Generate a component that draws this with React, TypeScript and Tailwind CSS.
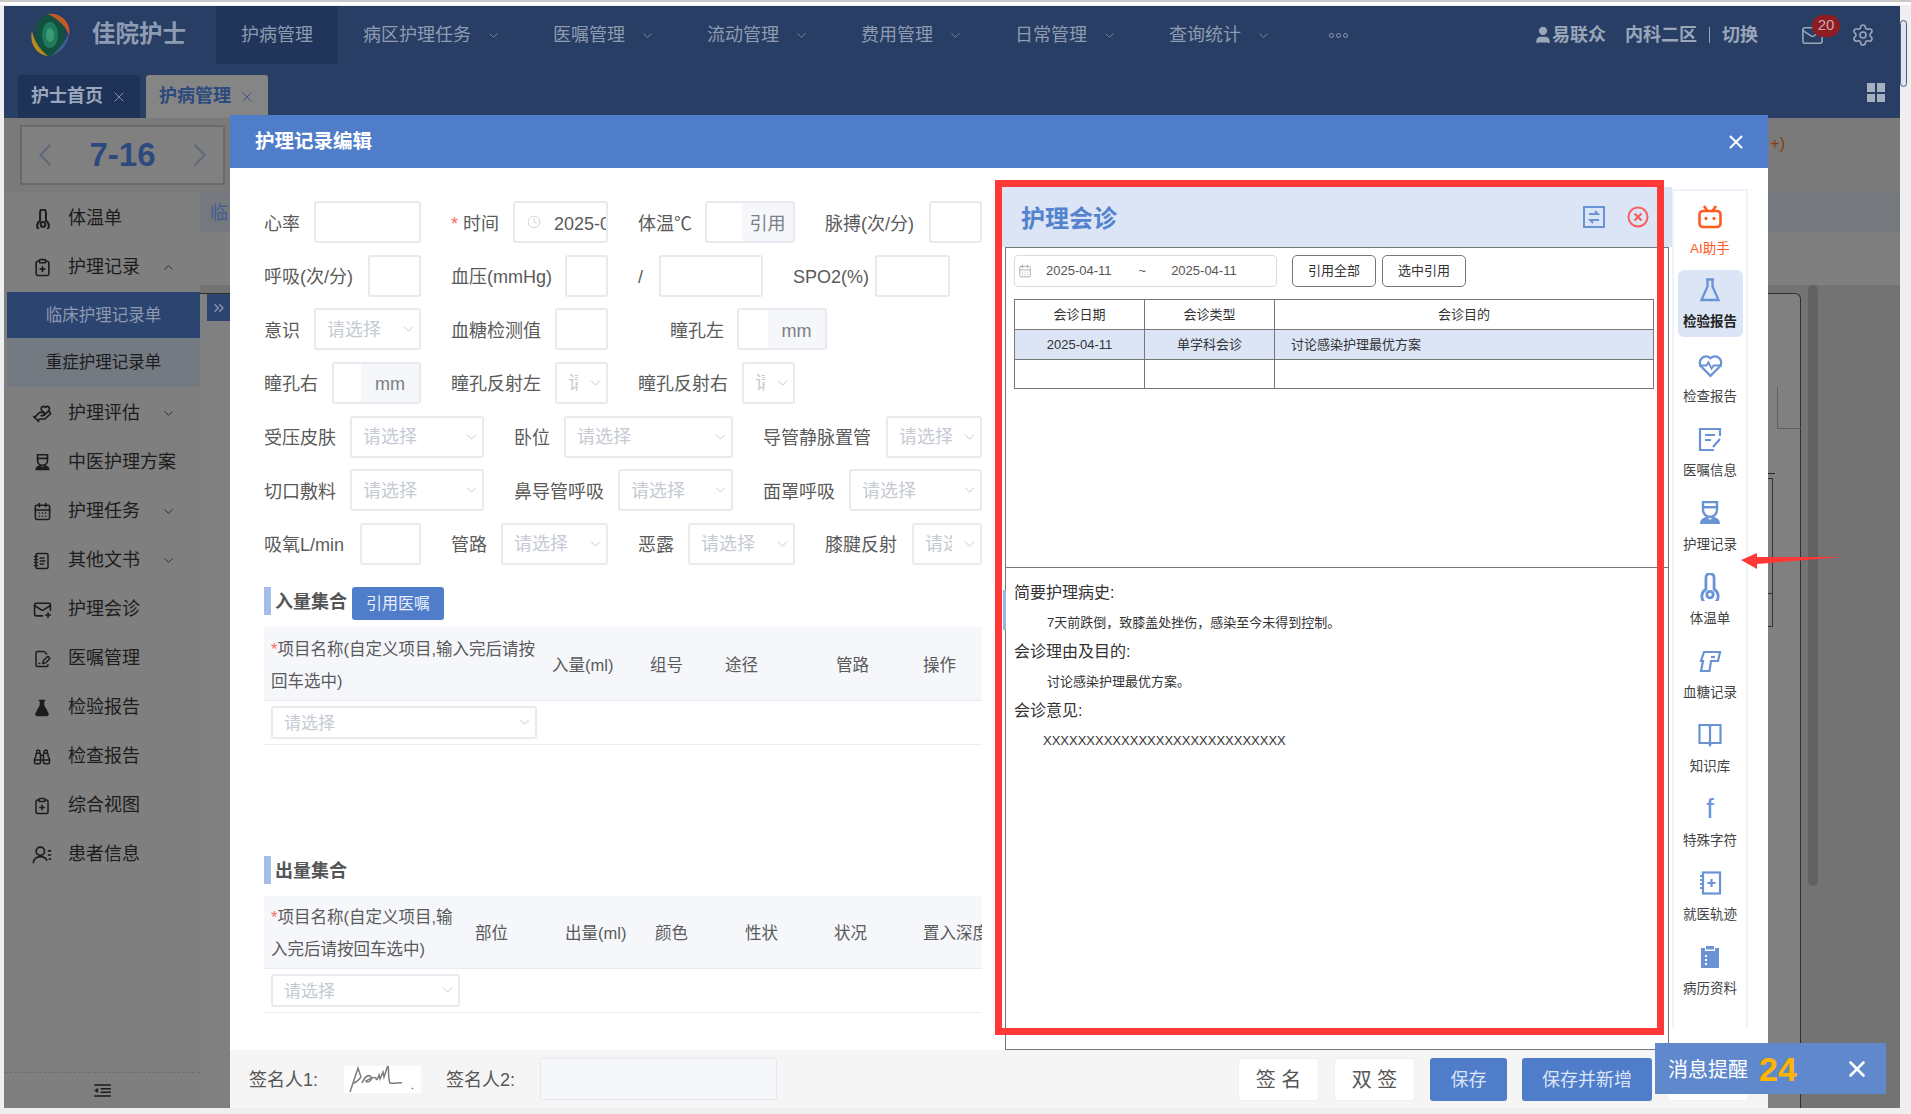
import React from 'react';
import {
  ChevronDown, ChevronUp, ChevronLeft, ChevronRight, X, ClipboardPlus, HandHeart, CalendarDays,
  NotebookText, MailPlus, FilePenLine, FlaskConical, Binoculars, Clock, Mail, Settings, User, ChevronsRight
} from 'lucide-react';

const navItems = ['病区护理任务', '医嘱管理', '流动管理', '费用管理', '日常管理', '查询统计'];

const NurseIcon: React.FC<{ className?: string }> = ({ className }) => (
  <svg viewBox="0 0 24 24" className={className} fill="currentColor">
    <path d="M5 1h14v8a7 7 0 0 1-14 0z" fill="none" stroke="currentColor" strokeWidth="2.4" />
    <rect x="5" y="5" width="14" height="2.4" />
    <path d="M2 23c0-5 4-7 7-7l3 3 3-3c3 0 7 2 7 7z" />
  </svg>
);

const ThermoIcon: React.FC<{ className?: string }> = ({ className }) => (
  <svg viewBox="0 0 24 24" className={className} fill="none" stroke="currentColor" strokeWidth="2.4">
    <path d="M8.5 14V4a3.500 3.500 0 0 1 7 0v10a7 7 0 1 1-7 0z" />
    <circle cx="12" cy="18.500" r="2.800" />
  </svg>
);

const PatientIcon = () => (
  <svg viewBox="0 0 24 24" className="w-[20px] h-[20px]" fill="none" stroke="currentColor" strokeWidth="2">
    <circle cx="10" cy="7.500" r="5" />
    <path d="M1.500 22c0-5 4-8 8.500-8s7 2 8 5M19 7h4M19 12h4M20 17h3" />
  </svg>
);

const sideItems: { label: string; icon: React.ReactNode; arrow?: boolean }[] = [
  { label: '护理评估', icon: <HandHeart size={20} />, arrow: true },
  { label: '中医护理方案', icon: <NurseIcon className="w-[17px] h-[17px]" /> },
  { label: '护理任务', icon: <CalendarDays size={19} />, arrow: true },
  { label: '其他文书', icon: <NotebookText size={18} />, arrow: true },
  { label: '护理会诊', icon: <MailPlus size={19} /> },
  { label: '医嘱管理', icon: <FilePenLine size={18} /> },
  { label: '检验报告', icon: <FlaskConical size={18} fill="currentColor" /> },
  { label: '检查报告', icon: <Binoculars size={18} /> },
  { label: '综合视图', icon: <ClipboardPlus size={18} /> },
  { label: '患者信息', icon: <PatientIcon /> },
];

const railIcons: { label: string; icon: React.ReactNode }[] = [
  {
    label: '检查报告',
    icon: (
      <svg viewBox="0 0 24 24" className="w-[25px] h-[25px]" fill="none" stroke="currentColor" strokeWidth="2.2">
        <path d="M12 22 3.500 13.500a6 6 0 0 1 0-8.500 6 6 0 0 1 8.500 0 6 6 0 0 1 8.500 0 6 6 0 0 1 0 8.500z" />
        <path d="M1 12h7l2-3 3 6 2-3h8" strokeWidth="1.800" />
      </svg>
    ),
  },
  {
    label: '医嘱信息',
    icon: (
      <svg viewBox="0 0 24 24" className="w-[24px] h-[24px]" fill="none" stroke="currentColor" strokeWidth="2.2">
        <path d="M22 9V2H2v21h14" />
        <path d="M7 8h10M7 13h6M15 20l7-8" />
      </svg>
    ),
  },
  { label: '护理记录', icon: <NurseIcon className="w-[24px] h-[24px]" /> },
  { label: '体温单', icon: <ThermoIcon className="w-[28px] h-[28px]" /> },
  {
    label: '血糖记录',
    icon: (
      <svg viewBox="0 0 24 24" className="w-[24px] h-[24px]" fill="none" stroke="currentColor" strokeWidth="2.2">
        <path d="M6 3h16l-2 9h-7l-1.500 10H3l2-10H3z" />
        <path d="M13 8h4" />
      </svg>
    ),
  },
  {
    label: '知识库',
    icon: (
      <svg viewBox="0 0 24 24" className="w-[24px] h-[24px]" fill="none" stroke="currentColor" strokeWidth="2.2">
        <path d="M1.500 2h9.500l1 1.500L13 2h9.500v18H13l-1 2-1-2H1.500z" />
        <path d="M12 3v17" />
      </svg>
    ),
  },
  { label: '特殊字符', icon: <span className="block h-[24px] leading-[24px] text-[27px]">f</span> },
  {
    label: '就医轨迹',
    icon: (
      <svg viewBox="0 0 24 24" className="w-[24px] h-[24px]" fill="none" stroke="currentColor" strokeWidth="2.2">
        <rect x="5" y="1.500" width="17" height="21" />
        <path d="M13.500 8v8M9.500 12h8M2 5h4M2 9h4M2 13h4M2 17h4" />
      </svg>
    ),
  },
  {
    label: '病历资料',
    icon: (
      <svg viewBox="0 0 24 24" className="w-[24px] h-[24px]" fill="currentColor">
        <path d="M3 3h4v3h10V3h4v20H3z" />
        <rect x="8" y="1" width="8" height="3.500" />
        <path d="M7 10h2v2H7zM7 14h2v2H7zM7 18h2v2H7z" fill="#fff" />
      </svg>
    ),
  },
];

const Field: React.FC<{ label: React.ReactNode; className: string; children: React.ReactNode }> = ({ label, className, children }) => (
  <div className={`flex items-center justify-between shrink-0 h-[42px] ${className}`}>
    <span className="whitespace-nowrap pt-[4px]">{label}</span>
    {children}
  </div>
);

const Box: React.FC<{ className: string; children?: React.ReactNode }> = ({ className, children }) => (
  <div className={`h-[42px] shrink-0 border-2 border-[#e8eaf0] rounded-[3px] flex items-center overflow-hidden bg-white ${className}`}>{children}</div>
);

const Select: React.FC<{ className: string; small?: boolean }> = ({ className, small }) => (
  <div className={`relative shrink-0 border-2 border-[#e8eaf0] rounded-[3px] bg-white flex items-center ${small ? 'h-[33px] text-[17px]' : 'h-[42px]'} ${className}`}>
    <span className="ml-[11px] mr-[28px] pt-[2px] min-w-0 overflow-hidden whitespace-nowrap text-[#c6cad3]">请选择</span>
    <ChevronDown size={17} strokeWidth={1.1} className="absolute right-[2px] top-1/2 -translate-y-1/2 text-[#b5b9c2]" />
  </div>
);

const Addon: React.FC<{ className: string; addonClass: string; text: string }> = ({ className, addonClass, text }) => (
  <Box className={className}>
    <div className="flex-1" />
    <div className={`h-full pt-[4px] flex items-center justify-center bg-[#f5f7fa] text-[#7a7d85] ${addonClass}`}>{text}</div>
  </Box>
);

const SectionTitle: React.FC<{ text: string; children?: React.ReactNode; className: string }> = ({ text, children, className }) => (
  <div className={`flex items-start ${className}`}>
    <div className="w-[7px] h-[28px] bg-[#a4bde8]" />
    <div className="ml-[4px] h-[28px] pt-[4px] flex items-center text-[18px] font-bold text-[#555]">{text}</div>
    {children}
  </div>
);

export default function App() {
  return (
    <div className="relative w-[1911px] h-[1114px] overflow-hidden bg-[#efefef] pt-[6px] pl-[4px] pr-[11px] pb-[6px] text-[18px] text-[#5a5a5a] font-['Liberation_Sans','Noto_Sans_CJK_SC',sans-serif]">
      <div className="absolute left-0 top-0 w-full h-[5px] bg-white border-t-2 border-[#c9c9c9]" />
      <div className="absolute left-[1900px] top-[20px] w-[7px] h-[67px] rounded-full bg-[#dfe6f2] border border-[#4a5a78]" />

      <div className="w-full h-full flex flex-col">
        {/* top nav */}
        <div className="h-[112px] shrink-0 bg-[#283e65] text-[#8e9bb1] flex flex-col">
          <div className="h-[58px] flex items-center">
            <svg viewBox="0 0 42 44" className="ml-[26px] w-[42px] h-[44px] shrink-0">
              <ellipse cx="20" cy="22" rx="15" ry="21" fill="#14503f" />
              <ellipse cx="20" cy="22" rx="8" ry="13" fill="#1f7a5c" />
              <ellipse cx="20" cy="22" rx="4" ry="7" fill="#3a9a78" />
              <path d="M18 1c12-2 24 8 21 22-2-8-9-16-21-22z" fill="#c65a26" />
              <path d="M2 18c-3 12 4 24 16 25-8-6-14-15-16-25z" fill="#b98a1c" />
              <path d="M39 20c0 10-8 20-18 23 7-6 14-14 18-23z" fill="#3a5f96" />
            </svg>
            <div className="ml-[20px] w-[124px] text-[23.5px] font-bold text-[#8e9cb3]">佳院护士</div>
            <div className="w-[122px] h-full bg-[#21355a] flex items-center justify-center">护病管理</div>
            <div className="ml-[25px] flex items-center gap-[52px]">
              {navItems.map(n => (
                <div key={n} className="flex items-center">
                  <span className="whitespace-nowrap">{n}</span>
                  <ChevronDown size={15} strokeWidth={1.2} className="ml-[15px]" />
                </div>
              ))}
              <div className="-ml-[46px] flex gap-[2px] pl-[52px]">
                <span className="w-[5px] h-[5px] rounded-full border border-[#8e9bb1]" />
                <span className="w-[5px] h-[5px] rounded-full border border-[#8e9bb1]" />
                <span className="w-[5px] h-[5px] rounded-full border border-[#8e9bb1]" />
              </div>
            </div>
            <div className="ml-auto flex items-center font-bold text-[#9aa6ba]">
              <User size={20} fill="currentColor" className="-mr-[1px]" />
              <span>易联众</span>
              <span className="ml-[19px]">内科二区</span>
              <span className="mx-[12px] w-px h-[16px] bg-[#9aa6ba]" />
              <span>切换</span>
              <div className="relative ml-[43px]">
                <Mail size={23} strokeWidth={1.6} />
                <span className="absolute -top-[9px] left-[11px] w-[28px] h-[22px] rounded-full bg-[#8f1c22] text-[#c8a9ae] text-[15px] font-normal flex items-center justify-center">20</span>
              </div>
              <Settings size={24} strokeWidth={1.6} className="ml-[27px] mr-[25px]" />
            </div>
          </div>
          <div className="flex-1 flex items-end pl-[14px]">
            <div className="w-[122px] h-[43px] bg-[#1f3358] rounded-t-[3px] flex items-center justify-center gap-[8px] font-bold text-[#9aa6ba]">
              护士首页<X size={16} strokeWidth={1.2} />
            </div>
            <div className="ml-[6px] w-[122px] h-[43px] bg-[#858585] rounded-t-[3px] flex items-center justify-center gap-[8px] font-bold text-[#2b4a7d]">
              护病管理<X size={16} strokeWidth={1.2} />
            </div>
            <div className="ml-auto mr-[15px] mb-[16px] w-[18px] h-[19px] grid grid-cols-2 gap-[2px]">
              <span className="bg-[#a6b0c0]" />
              <span className="bg-[#a6b0c0]" />
              <span className="bg-[#a6b0c0]" />
              <span className="bg-[#a6b0c0]" />
            </div>
          </div>
        </div>

        {/* date strip */}
        <div className="h-[74px] shrink-0 bg-[#7a7a7a] flex items-start justify-between">
          <div className="ml-[16px] mt-[7px] w-[205px] h-[60px] border-2 border-[#6a6a6a] bg-[#808080] flex items-center justify-between px-[4px]">
            <ChevronLeft size={38} strokeWidth={1.5} className="text-[#5f6b7c]" />
            <span className="text-[33px] font-bold text-[#2c4a7c]">7-16</span>
            <ChevronRight size={38} strokeWidth={1.5} className="text-[#5f6b7c]" />
          </div>
          <span className="mt-[14px] mr-[115px] text-[16px] text-[#8a3b10]">+)</span>
        </div>

        <div className="flex-1 flex min-h-0">
          {/* sidebar */}
          <div className="w-[196px] shrink-0 bg-[#7f7f7f] flex flex-col text-[#1c1c1c]">
            <div className="h-[49px] mt-[2px] flex items-center">
              <ThermoIcon className="w-[20px] h-[20px] ml-[29px]" />
              <span className="ml-[15px]">体温单</span>
            </div>
            <div className="h-[49px] flex items-center">
              <ClipboardPlus size={19} className="ml-[29px]" />
              <span className="ml-[16px]">护理记录</span>
              <ChevronUp size={15} strokeWidth={1.3} className="ml-[21px]" />
            </div>
            <div className="ml-[3px] h-[46px] text-[16.5px] bg-[#2b4470] text-[#8d9ab0] flex items-center justify-center">临床护理记录单</div>
            <div className="ml-[3px] h-[49px] mb-[2px] text-[16.5px] bg-[#737a82] flex items-center justify-center">重症护理记录单</div>
            {sideItems.map(s => (
              <div key={s.label} className="h-[49px] flex items-center">
                <span className="w-[28px] ml-[24px] flex justify-center">{s.icon}</span>
                <span className="ml-[12px] whitespace-nowrap">{s.label}</span>
                {s.arrow && <ChevronDown size={15} strokeWidth={1.3} className="ml-[21px]" />}
              </div>
            ))}
            <div className="mt-auto h-[36px] border-t border-dashed border-[#6d6d6d] flex items-center justify-center">
              <svg viewBox="0 0 20 14" className="w-[19px] h-[13px]" fill="none" stroke="#1c1c1c" strokeWidth="1.600">
                <path d="M1 1h18M8 5h11M8 9h11M1 13h18" />
                <path d="M5 4.500 1.500 7 5 9.500z" fill="#1c1c1c" strokeWidth="0.500" />
              </svg>
            </div>
          </div>

          {/* main behind the dialog */}
          <div className="flex-1 flex flex-col bg-[#737373] min-w-0">
            <div className="h-[40px] shrink-0 bg-[#75787d] flex items-center pl-[10px] pt-[3px] text-[#3f5f92]">临</div>
            <div className="h-[53px] shrink-0 bg-[#7f7f7f]" />
            <div className="flex-1 flex min-h-0">
              <div className="flex-1 mt-[8px] bg-[#808080] border-t border-r border-[#2f2f2f] rounded-tr-[6px] pl-[7px]">
                <div className="w-[23px] h-[27px] bg-[#2b4470] flex items-center justify-center text-[#8d9ab0]">
                  <ChevronsRight size={16} />
                </div>
              </div>
              <div className="w-[99px] shrink-0 pl-[7px]">
                <div className="w-[10px] h-[601px] rounded-full bg-[#626262]" />
              </div>
            </div>
          </div>
        </div>
      </div>

      {/* bits of the page peeking out beside the dialog */}
      <div className="absolute left-[1777px] top-[387px] w-[24px] h-[42px] border-l border-b border-[#5f5f5f]" />
      <div className="absolute left-[1768px] top-[473px] w-[7px] h-px bg-[#222]" />
      <div className="absolute left-[1768px] top-[478px] w-[5px] h-[149px] border-y border-r border-[#333]" />
      <div className="absolute left-[1768px] top-[593px] w-[4px] h-px bg-[#333]" />

      {/* dialog */}
      <div className="absolute left-[230px] top-[115px] w-[1538px] h-[993px] bg-white flex flex-col">
        <div className="h-[53px] shrink-0 bg-[#4f7dca] flex items-center justify-between pl-[25px] pr-[21px] pt-[1px] text-[19.5px] text-white font-bold">
          护理记录编辑
          <X size={22} strokeWidth={2.2} />
        </div>
        <div className="flex-1 flex min-h-0">
          {/* form */}
          <div className="w-[772px] shrink-0 pl-[34px] pt-[33px] overflow-hidden">
            <div className="w-[718px] flex flex-col gap-[11.67px]">
              <div className="flex gap-[30px]">
                <Field label="心率" className="w-[157px]"><Box className="w-[107px]" /></Field>
                <Field label={<><span className="text-[#f56c6c]">* </span>时间</>} className="w-[157px]">
                  <Box className="w-[95px]">
                    <Clock size={14} strokeWidth={1.2} className="ml-[12px] shrink-0 text-[#c0c4cc]" />
                    <span className="ml-[13px] pt-[4px] whitespace-nowrap">2025-04</span>
                  </Box>
                </Field>
                <Field label="体温℃" className="w-[157px]"><Addon className="w-[90px]" addonClass="w-[51px]" text="引用" /></Field>
                <Field label="脉搏(次/分)" className="w-[157px]"><Box className="w-[53px]" /></Field>
              </div>
              <div className="flex gap-[30px]">
                <Field label="呼吸(次/分)" className="w-[157px]"><Box className="w-[53px]" /></Field>
                <Field label="血压(mmHg)" className="w-[157px]"><Box className="w-[43px]" /></Field>
                <Field label="/" className="w-[125px]"><Box className="w-[104px]" /></Field>
                <Field label="SPO2(%)" className="w-[157px]"><Box className="w-[75px]" /></Field>
              </div>
              <div className="flex gap-[30px]">
                <Field label="意识" className="w-[157px]"><Select className="w-[107px]" /></Field>
                <Field label="血糖检测值" className="w-[157px]"><Box className="w-[53px]" /></Field>
                <Field label="瞳孔左" className="w-[157px] ml-[32px]"><Addon className="w-[90px]" addonClass="w-[57px]" text="mm" /></Field>
              </div>
              <div className="flex gap-[30px]">
                <Field label="瞳孔右" className="w-[157px]"><Addon className="w-[89px]" addonClass="w-[58px]" text="mm" /></Field>
                <Field label="瞳孔反射左" className="w-[157px]"><Select className="w-[53px]" /></Field>
                <Field label="瞳孔反射右" className="w-[157px]"><Select className="w-[53px]" /></Field>
              </div>
              <div className="flex gap-[30px]">
                <Field label="受压皮肤" className="w-[220px]"><Select className="w-[134px]" /></Field>
                <Field label="卧位" className="w-[219px]"><Select className="w-[169px]" /></Field>
                <Field label="导管静脉置管" className="w-[219px]"><Select className="w-[96px]" /></Field>
              </div>
              <div className="flex gap-[30px]">
                <Field label="切口敷料" className="w-[220px]"><Select className="w-[134px]" /></Field>
                <Field label="鼻导管呼吸" className="w-[219px]"><Select className="w-[115px]" /></Field>
                <Field label="面罩呼吸" className="w-[219px]"><Select className="w-[133px]" /></Field>
              </div>
              <div className="flex gap-[30px]">
                <Field label="吸氧L/min" className="w-[157px]"><Box className="w-[61px]" /></Field>
                <Field label="管路" className="w-[157px]"><Select className="w-[107px]" /></Field>
                <Field label="恶露" className="w-[157px]"><Select className="w-[107px]" /></Field>
                <Field label="膝腱反射" className="w-[157px]"><Select className="w-[70px]" /></Field>
              </div>
            </div>

            <div className="w-[718px] text-[16.5px]">
              <SectionTitle text="入量集合" className="mt-[22px] h-[33px]">
                <div className="ml-[5px] w-[92px] h-[33px] pt-[2px] text-[16px] rounded-[3px] bg-[#4f7dca] text-[#e8eefa] flex items-center justify-center">引用医嘱</div>
              </SectionTitle>
              <div className="mt-[7px] h-[74px] bg-[#f5f7fa] border-b border-[#e9ebf0] flex items-center pl-[7px] pt-[3px]">
                <div className="w-[281px] shrink-0 leading-[32px] whitespace-nowrap"><span className="text-[#f56c6c]">*</span>项目名称(自定义项目,输入完后请按<br />回车选中)</div>
                <div className="w-[98px] shrink-0">入量(ml)</div>
                <div className="w-[75px] shrink-0">组号</div>
                <div className="w-[111px] shrink-0">途径</div>
                <div className="w-[87px] shrink-0">管路</div>
                <div className="shrink-0">操作</div>
              </div>
              <div className="h-[44px] border-b border-[#eceef2] pl-[7px] pt-[5px]"><Select small className="w-[266px]" /></div>

              <SectionTitle text="出量集合" className="mt-[111px] h-[28px]" />
              <div className="mt-[12px] h-[73px] bg-[#f5f7fa] border-b border-[#e9ebf0] flex items-center pl-[7px] pt-[3px] overflow-hidden">
                <div className="w-[204px] shrink-0 leading-[32px] whitespace-nowrap"><span className="text-[#f56c6c]">*</span>项目名称(自定义项目,输<br />入完后请按回车选中)</div>
                <div className="w-[90px] shrink-0">部位</div>
                <div className="w-[90px] shrink-0">出量(ml)</div>
                <div className="w-[90px] shrink-0">颜色</div>
                <div className="w-[89px] shrink-0">性状</div>
                <div className="w-[89px] shrink-0">状况</div>
                <div className="shrink-0 whitespace-nowrap">置入深度</div>
              </div>
              <div className="h-[44px] border-b border-[#eceef2] pl-[7px] pt-[5px]"><Select small className="w-[189px]" /></div>
            </div>
          </div>

          {/* consultation panel */}
          <div className="w-[670px] shrink-0 mt-[19px] flex flex-col text-[13px] text-[#333]">
            <div className="h-[60px] shrink-0 bg-[#dce5f6] flex items-center justify-between pl-[19px] pr-[23px]">
              <span className="pt-[4px] text-[24px] font-bold text-[#5382cf]">护理会诊</span>
              <div className="flex items-center gap-[22px]">
                <svg viewBox="0 0 22 22" className="w-[22px] h-[22px]" fill="none" stroke="#6a93d6" strokeWidth="2">
                  <rect x="1" y="1" width="20" height="20" />
                  <path d="M6 8h9l-3-3M16 14H7l3 3" strokeWidth="1.800" />
                </svg>
                <svg viewBox="0 0 22 22" className="w-[22px] h-[22px]" fill="none" stroke="#f76060" strokeWidth="2">
                  <circle cx="11" cy="11" r="9.500" />
                  <path d="m7.500 7.500 7 7m0-7-7 7" strokeWidth="2.200" />
                </svg>
              </div>
            </div>
            <div className="flex-1 mx-[3px] border border-t-[1.5px] border-[#777] flex flex-col min-h-0 bg-white">
              <div className="h-[319px] shrink-0 pl-[8px] pr-[14px] pt-[7px]">
                <div className="flex">
                  <div className="w-[263px] h-[32px] border border-[#d8dbe2] rounded-[4px] flex items-center text-[#555]">
                    <CalendarDays size={14} strokeWidth={1.3} className="ml-[3px] text-[#999]" />
                    <span className="ml-[14px]">2025-04-11</span>
                    <span className="ml-[27px]">~</span>
                    <span className="ml-[25px]">2025-04-11</span>
                  </div>
                  <div className="ml-[15px] w-[84px] h-[32px] border border-[#777] rounded-[5px] flex items-center justify-center">引用全部</div>
                  <div className="ml-[6px] w-[84px] h-[32px] border border-[#777] rounded-[5px] flex items-center justify-center">选中引用</div>
                </div>
                <div className="mt-[12px] w-[640px] border border-[#777] flex flex-col">
                  <div className="h-[30px] flex border-b border-[#777]">
                    <div className="w-[130px] border-r border-[#777] flex items-center justify-center">会诊日期</div>
                    <div className="w-[130px] border-r border-[#777] flex items-center justify-center">会诊类型</div>
                    <div className="flex-1 flex items-center justify-center">会诊目的</div>
                  </div>
                  <div className="h-[30px] flex border-b border-[#777] bg-[#dce5f6]">
                    <div className="w-[130px] border-r border-[#777] flex items-center justify-center">2025-04-11</div>
                    <div className="w-[130px] border-r border-[#777] flex items-center justify-center">单学科会诊</div>
                    <div className="flex-1 flex items-center pl-[16px]">讨论感染护理最优方案</div>
                  </div>
                  <div className="h-[28px] flex">
                    <div className="w-[130px] border-r border-[#777]" />
                    <div className="w-[130px] border-r border-[#777]" />
                    <div className="flex-1" />
                  </div>
                </div>
              </div>
              <div className="relative flex-1 border-t border-[#777] pl-[8px] pt-[10px]">
                <div className="absolute -left-[3px] top-[22px] w-[3px] h-[40px] bg-[#9db4dc]" />
                <div className="h-[29.500px] flex items-center text-[16px]">简要护理病史:</div>
                <div className="h-[29.500px] flex items-center pl-[33px]">7天前跌倒，致膝盖处挫伤，感染至今未得到控制。</div>
                <div className="h-[29.500px] flex items-center text-[16px]">会诊理由及目的:</div>
                <div className="h-[29.500px] flex items-center pl-[33px]">讨论感染护理最优方案。</div>
                <div className="h-[29.500px] flex items-center text-[16px]">会诊意见:</div>
                <div className="h-[29.500px] flex items-center pl-[29px]">XXXXXXXXXXXXXXXXXXXXXXXXXXXX</div>
              </div>
            </div>
          </div>

          {/* right rail */}
          <div className="w-[76px] shrink-0 mt-[21px] mb-[22px] border-x-2 border-t-2 border-[#eef2f9] pt-[4px] text-[13.5px] text-[#444] flex flex-col items-center">
            <div className="w-[65px] h-[74px] pt-[10px] flex flex-col items-center text-[#ff5a1f]">
              <svg viewBox="0 0 24 24" className="w-[24px] h-[24px] shrink-0" fill="none" stroke="currentColor" strokeWidth="2.6">
                <rect x="1.500" y="6" width="21" height="16" rx="3.500" />
                <path d="m6 1 3.500 5M18 1l-3.500 5" />
                <circle cx="8" cy="13.500" r="1.300" fill="currentColor" strokeWidth="0.800" />
                <circle cx="16" cy="13.500" r="1.300" fill="currentColor" strokeWidth="0.800" />
              </svg>
              <span className="mt-[11px] h-[18px] leading-[18px]">AI助手</span>
            </div>
            <div className="w-[65px] h-[67px] mb-[7px] mt-[1px] pt-[8px] rounded-[6px] bg-[#dce5f6] flex flex-col items-center text-[#222]">
              <svg viewBox="0 0 24 24" className="w-[24px] h-[24px] shrink-0" fill="none" stroke="#6a93d6" strokeWidth="2.3">
                <path d="M8 1.500h8M9.500 1.500v7L3.500 22h17l-6-13.500v-7" />
              </svg>
              <span className="mt-[11px] h-[18px] leading-[18px] font-bold">检验报告</span>
            </div>
            {railIcons.map(r => (
              <div key={r.label} className="w-[65px] h-[74px] pt-[9px] flex flex-col items-center">
                <span className="h-[24px] flex items-center justify-center text-[#6a93d6]">{r.icon}</span>
                <span className="mt-[11px] h-[18px] leading-[18px]">{r.label}</span>
              </div>
            ))}
          </div>
        </div>

        {/* footer */}
        <div className="h-[58px] shrink-0 bg-[#f5f5f5] flex items-center pl-[19px] pr-[19px] text-[#555]">
          <span className="w-[71px] pt-[2px] whitespace-nowrap">签名人1:</span>
          <div className="ml-[24px] w-[77px] h-[27px] bg-white flex items-center justify-center">
            <svg viewBox="0 0 77 27" className="w-[77px] h-[27px]" fill="none" stroke="#7d7d7d" strokeWidth="1.5">
              <path d="M6 26 14 2l3 9c-3 4-6 6-8 6M18 17c3-7 7-9 9-6s-4 7-5 4c4-2 7-5 10-3 0 2 1 3 3-3l1 4 3-7 1 5 4-12c1 6 0 14 2 18 5 1 9-1 12 0M68 22l1 1" />
            </svg>
          </div>
          <span className="ml-[25px] w-[71px] pt-[2px] whitespace-nowrap">签名人2:</span>
          <div className="ml-[23px] w-[237px] h-[42px] bg-[#f5f7fa] border border-[#e6e8ee] rounded-[2px]" />
          <div className="ml-auto flex items-center gap-[15px]">
            <div className="w-[81px] h-[43px] pt-[2px] bg-white border border-[#eceef2] rounded-[3px] flex items-center justify-center text-[20px]">签 名</div>
            <div className="w-[81px] h-[43px] pt-[2px] bg-white border border-[#eceef2] rounded-[3px] flex items-center justify-center text-[20px]">双 签</div>
            <div className="w-[77px] h-[43px] pt-[2px] bg-[#4f7dca] rounded-[3px] text-[#dce5f6] flex items-center justify-center">保存</div>
            <div className="w-[130px] h-[43px] pt-[2px] bg-[#4f7dca] rounded-[3px] text-[#dce5f6] flex items-center justify-center">保存并新增</div>
            <div className="w-[82px] h-[43px] bg-white border border-[#eceef2] rounded-[3px]" />
          </div>
        </div>
      </div>

      {/* annotations */}
      <div className="absolute left-[995px] top-[180px] w-[669px] h-[855px] border-[7px] border-[#ff3838] pointer-events-none" />
      <svg viewBox="0 0 102 16" className="absolute left-[1741px] top-[553px] w-[102px] h-[16px]">
        <path d="M0 7 16 0v4l86 0-86 7v5z" fill="#ff3838" />
      </svg>
      <div className="absolute left-[1655px] top-[1043px] w-[231px] h-[51px] bg-[#5f88cd] flex items-center pl-[13px] text-white">
        <span className="pt-[2px] text-[20px]">消息提醒</span>
        <span className="ml-[11px] pt-[2px] text-[34px] font-bold text-[#ffb400]">24</span>
        <X size={26} strokeWidth={2.4} className="ml-auto mr-[16px]" />
      </div>
    </div>
  );
}
